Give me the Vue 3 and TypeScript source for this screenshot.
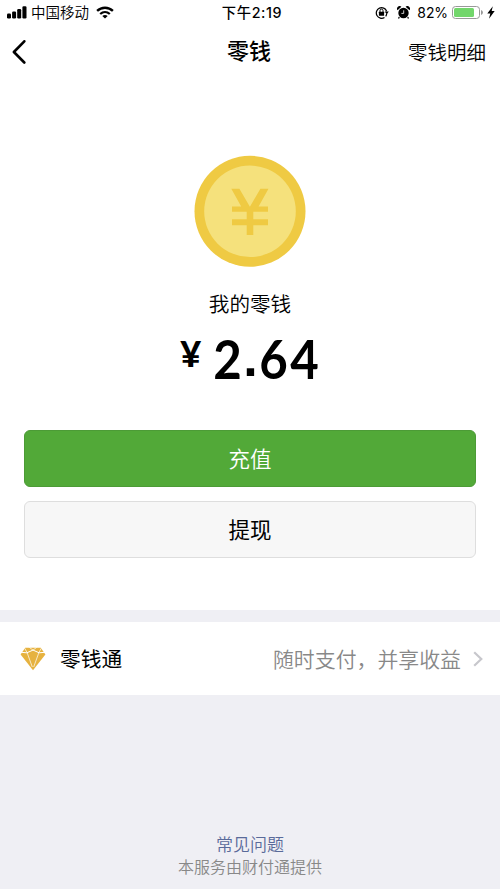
<script setup lang="ts">
import { ref } from 'vue'

const carrier = ref('中国移动')
const time = ref('下午2:19')
const battery = ref(82)
const balance = ref('2.64')
</script>

<template>
  <div class="page">
    <header class="status">
      <div class="side">
        <svg class="signal" width="20" height="13" viewBox="0 0 20 13">
          <rect x="0" y="7.5" width="4" height="5" rx="1.2" />
          <rect x="5.1" y="5.5" width="4" height="7" rx="1.2" />
          <rect x="10.2" y="3" width="4" height="9.5" rx="1.2" />
          <rect x="15.4" y="0.3" width="4.1" height="12.2" rx="1.2" />
        </svg>
        <span class="carrier">{{ carrier }}</span>
        <svg class="wifi" width="18" height="13" viewBox="0 0 18 13">
          <path d="M1.1 4.9C5.6.6 12.4.6 16.9 4.9" fill="none" stroke="#000" stroke-width="2.4" />
          <path d="M4.2 8C7 5.4 11 5.4 13.8 8" fill="none" stroke="#000" stroke-width="2.2" />
          <path d="M6.3 10C7.9 8.6 10.1 8.6 11.7 10L9 12.6Z" />
        </svg>
      </div>
      <div class="time">{{ time }}</div>
      <div class="side right">
        <svg class="lock" width="14" height="13" viewBox="0 0 14 13">
          <path d="M9.5 11.4A5.3 5.3 0 1 1 11.6 5.2" fill="none" stroke="#000" stroke-width="1.2" />
          <path d="M9.7 5.4H13.8L11.8 8.2Z" />
          <path d="M10.7 10.3A5.3 5.3 0 0 0 11.7 7.5" fill="none" stroke="#000" stroke-width="1.2" />
          <rect x="3.9" y="5.7" width="5.2" height="4" rx=".5" />
          <path d="M5 6V4.6a1.5 1.5 0 0 1 3 0V6" fill="none" stroke="#000" stroke-width="1" />
        </svg>
        <svg class="alarm" width="13" height="13" viewBox="0 0 13 13">
          <circle cx="6.5" cy="7" r="5.2" />
          <path d="M2.3 11.1 1.5 12.5M10.7 11.1l.8 1.4" stroke="#000" stroke-width="1.3" />
          <path d="M.5 4.2A2.6 2.6 0 0 1 4.4.8ZM12.5 4.2A2.6 2.6 0 0 0 8.6.8Z" />
          <path d="M6.7 4.3V7.4H4.4" fill="none" stroke="#fff" stroke-width=".8" />
        </svg>
        <span class="percent">{{ battery }}%</span>
        <span class="battery"><span class="level" :style="{ width: battery + '%' }"></span></span>
        <svg class="cap" width="2" height="5" viewBox="0 0 2 5"><path d="M0 0Q2 .7 2 2.5T0 5Z" fill="#999" /></svg>
        <svg class="bolt" width="8" height="13" viewBox="0 0 8 13">
          <path d="M5.8.3.3 7.4H3.3L2 12.7 7.7 5.1H4.7Z" />
        </svg>
      </div>
    </header>

    <nav class="nav">
      <svg class="back" width="14" height="24" viewBox="0 0 14 24">
        <path d="M12.3 1.3 1.9 12 12.3 22.5" fill="none" stroke="#000" stroke-width="2.6" stroke-linecap="round" stroke-linejoin="round" />
      </svg>
      <h1 class="title">零钱</h1>
      <a class="detail">零钱明细</a>
    </nav>

    <main class="wallet">
      <svg class="coin" width="112" height="112" viewBox="0 0 112 112">
        <circle cx="56" cy="56.3" r="55.5" fill="#efca43" />
        <circle cx="56" cy="56.3" r="45.8" fill="#f5e17c" />
        <path d="M37.3 33.8H45.4L55.9 51.7 66.4 33.8H74.5L64.6 51.4H74V56.7H59.3V64.3H74V70.2H59.3V80H52.7V70.2H38V64.3H52.7V56.7H38V51.4H47.2Z" fill="#efca43" />
      </svg>
      <p class="label">我的零钱</p>
      <p class="amount">
        <span class="yen">¥</span>
        <span v-for="(ch, i) in balance" :key="i" :class="ch === '.' ? 'dot' : 'digit'">{{ ch }}</span>
      </p>
      <div class="actions">
        <button class="btn primary">充值</button>
        <button class="btn plain">提现</button>
      </div>
    </main>

    <section class="row">
      <svg class="gem" width="26" height="24" viewBox="0 0 26 24">
        <path d="M5.2.8H20.8L25.4 7.5 13 23.2.6 7.5Z" fill="#e6b23f" />
        <path d="M0 5.2 6.8 5.8 13 3.1 19.2 5.8 26 5.2" fill="none" stroke="#fff" stroke-width="1" />
        <path d="M4.7 1.2 7.2 5.8 12.3 20M21.3 1.2 18.8 5.8 13.7 20M9.3.4 13 3.1 16.7.4" fill="none" stroke="#fff" stroke-width=".7" />
      </svg>
      <span class="name">零钱通</span>
      <span class="hint">随时支付，并享收益</span>
      <svg class="chevron" width="10" height="16" viewBox="0 0 10 16">
        <path d="M1.2 1.2 8.3 8 1.2 14.8" fill="none" stroke="#c7c7cc" stroke-width="2.2" />
      </svg>
    </section>

    <footer class="footer">
      <a class="faq">常见问题</a>
      <span class="provider">本服务由财付通提供</span>
    </footer>
  </div>
</template>

<style>
body {
  margin: 0;
  background: #efeff4;
}
</style>

<style scoped>
.page {
  width: 500px;
  height: 889px;
  display: flex;
  flex-direction: column;
  overflow: hidden;
  background: #efeff4;
  color: #000;
  font-family: Inter, "Noto Sans CJK SC", sans-serif;
}
svg {
  display: block;
  flex: none;
}
.status {
  height: 25px;
  display: grid;
  grid-template-columns: 1fr auto 1fr;
  align-items: center;
  background: #fff;
  font-size: 14.5px;
  line-height: 25px;
}
.side {
  display: flex;
  align-items: center;
  padding-left: 7px;
}
.carrier {
  margin-left: 4px;
  font-weight: 350;
}
.wifi {
  margin-left: 7px;
}
.time {
  padding-left: 4px;
  font-weight: 450;
  font-size: 14.3px;
  letter-spacing: 0.6px;
}
.right {
  justify-content: flex-end;
  padding: 0 5px 0 0;
}
.lock {
  margin-right: 1px;
}
.alarm {
  margin-left: 7px;
}
.percent {
  margin-left: 7px;
  font-size: 14px;
  letter-spacing: -0.1px;
}
.battery {
  box-sizing: border-box;
  width: 28px;
  height: 13px;
  margin-left: 4px;
  padding: 1px;
  border: 1px solid #999;
  border-radius: 3.5px;
}
.level {
  display: block;
  height: 9px;
  border-radius: 1.5px;
  background: #72d66b;
}
.cap {
  margin-left: 1px;
}
.bolt {
  margin-left: 4px;
}
.nav {
  height: 53px;
  display: grid;
  grid-template-columns: 1fr auto 1fr;
  align-items: center;
  box-sizing: border-box;
  padding: 0 14px 0 12px;
  background: #fff;
}
.title {
  margin: 0;
  padding-bottom: 5px;
  font-size: 22px;
  font-weight: 500;
}
.detail {
  justify-self: end;
  font-size: 19.5px;
  font-weight: 350;
}
.wallet {
  height: 532px;
  display: flex;
  flex-direction: column;
  align-items: center;
  box-sizing: border-box;
  padding-top: 77px;
  background: #fff;
}
.label {
  margin: 23px 0 0;
  font-size: 20.6px;
  font-weight: 350;
  line-height: 30px;
}
.amount {
  display: flex;
  margin: 2px 0 0;
  font-family: Lato, sans-serif;
  font-size: 53.5px;
  font-weight: 700;
  line-height: 72px;
}
.yen {
  margin-right: 11px;
  font-size: 36px;
  font-weight: 900;
  line-height: 62px;
}
.digit {
  transform: scaleX(0.92);
}
.dot {
  font-family: "Liberation Sans", sans-serif;
  font-size: 52px;
}
.actions {
  align-self: stretch;
  display: flex;
  flex-direction: column;
  gap: 14px;
  margin-top: 36px;
  padding: 0 24px;
}
.btn {
  height: 57px;
  box-sizing: border-box;
  padding: 0;
  border: 1px solid #dedede;
  border-radius: 6px;
  font-family: inherit;
  font-size: 21.5px;
  line-height: 54px;
}
.primary {
  border-color: #4c9b36;
  background: #52a938;
  color: #fff;
  font-weight: 350;
}
.plain {
  background: #f7f7f7;
  color: #000;
}
.row {
  height: 73px;
  display: flex;
  align-items: center;
  box-sizing: border-box;
  margin-top: 12px;
  padding: 0 17px 0 20px;
  background: #fff;
}
.name {
  flex: 1;
  margin-left: 14px;
  padding-bottom: 2px;
  font-size: 20.7px;
}
.hint {
  padding-bottom: 2px;
  color: #888;
  font-size: 20.9px;
  font-weight: 350;
}
.chevron {
  margin-left: 12px;
}
.footer {
  flex: 1;
  display: flex;
  flex-direction: column;
  align-items: center;
  justify-content: flex-end;
  padding-bottom: 10px;
}
.faq {
  color: #596a9a;
  font-size: 17px;
  line-height: 22px;
  font-weight: 350;
}
.provider {
  color: #888;
  font-size: 16px;
  font-weight: 350;
  line-height: 23px;
}
</style>
